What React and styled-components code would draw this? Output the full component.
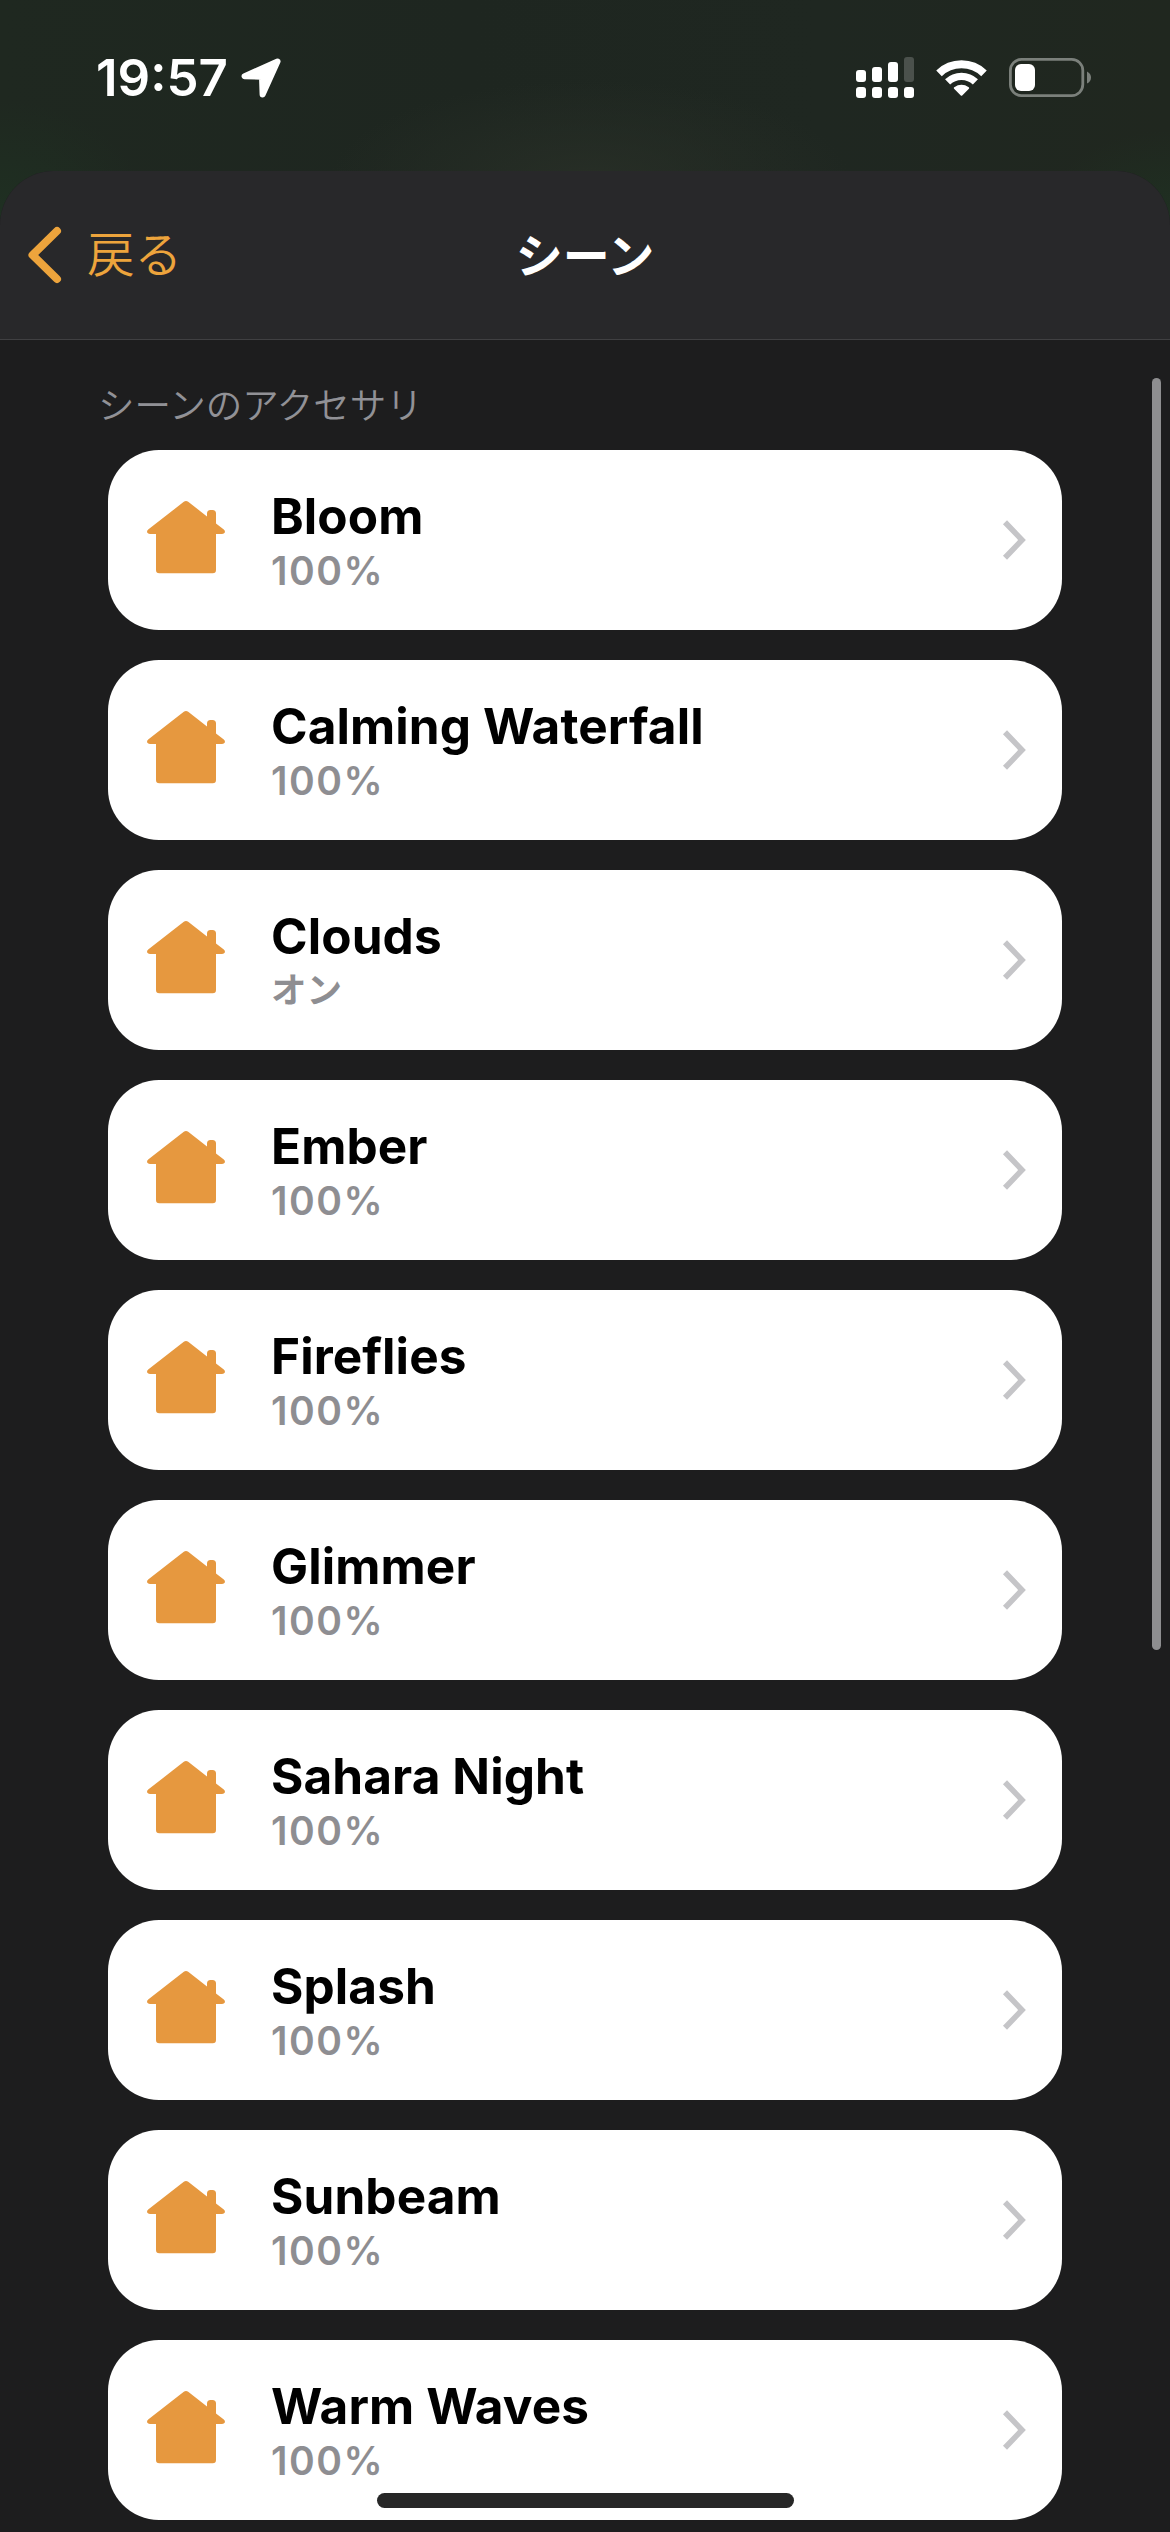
import React from "react";
import styled, { createGlobalStyle } from "styled-components";

const GlobalStyle = createGlobalStyle`
  * { box-sizing: border-box; }
  html, body { margin: 0; padding: 0; background: #1d1d1e; }
  body { font-family: Inter, "Noto Sans CJK JP", sans-serif; }
`;

const Screen = styled.div`
  position: relative;
  display: flex;
  flex-direction: column;
  width: 1170px;
  height: 2532px;
  overflow: hidden;
  background:
    radial-gradient(ellipse 260px 100px at 590px 180px, #272e26 0%, rgba(39, 46, 38, 0) 100%),
    radial-gradient(ellipse 150px 120px at 0 220px, #1f3022 0%, rgba(31, 48, 34, 0) 100%),
    radial-gradient(ellipse 130px 90px at 1170px 220px, #1f3022 0%, rgba(31, 48, 34, 0) 100%),
    linear-gradient(90deg, #1f2820 0%, #1e2620 40%, #1f2721 70%, #20271f 100%);
`;

const StatusBar = styled.header`
  display: flex;
  justify-content: space-between;
  flex: none;
  height: 171px;
  padding: 50px 79px 0 96px;
`;

const StatusGroup = styled.div`
  display: flex;
  align-items: center;
  height: 56px;
`;

const Clock = styled.time`
  width: 145px;
  font-size: 51px;
  font-weight: 600;
  line-height: 56px;
  letter-spacing: 0;
  color: #fff;
`;

const Glyph = styled.svg`
  display: block;
  flex: none;
  margin-left: ${(p) => p.$gap || 0}px;
  margin-bottom: ${(p) => p.$lift || 0}px;
`;

const Sheet = styled.main`
  display: flex;
  flex-direction: column;
  flex: 1;
  overflow: hidden;
  border-radius: 54px 54px 0 0;
  background: #1d1d1e;
`;

const NavBar = styled.nav`
  display: grid;
  grid-template-columns: 1fr auto 1fr;
  align-items: center;
  flex: none;
  height: 169px;
  border-bottom: 1px solid #404042;
  background: #28282a;
`;

const BackButton = styled.button`
  display: flex;
  align-items: center;
  gap: 25px;
  padding: 0 0 0 28px;
  border: 0;
  background: none;
  color: #eda43c;
  font: 350 47.5px/60px "Noto Sans CJK JP", sans-serif;
`;

const BackLabel = styled.span`
  padding-bottom: 6px;
`;

const NavTitle = styled.h1`
  margin: 0;
  padding-bottom: 4px;
  font: 700 47px/60px "Noto Sans CJK JP", sans-serif;
  color: #fff;
`;

const SectionTitle = styled.h2`
  flex: none;
  height: 110px;
  margin: 0;
  padding: 37px 0 0 98px;
  font: 350 36.5px/54px "Noto Sans CJK JP", sans-serif;
  color: #919196;
`;

const SceneList = styled.ul`
  display: flex;
  flex-direction: column;
  gap: 30px;
  margin: 0;
  padding: 0 108px;
  list-style: none;
`;

const SceneCard = styled.li`
  display: flex;
  align-items: center;
  height: 180px;
  padding: 0 36px 0 39px;
  border-radius: 51px;
  background: #fff;
`;

const SceneText = styled.div`
  flex: 1;
  display: flex;
  flex-direction: column;
  padding: 2px 0 0 46px;
`;

const SceneName = styled.span`
  font-size: 49.5px;
  font-weight: 650;
  line-height: 60px;
  letter-spacing: 0.1px;
  color: #000;
`;

const SceneState = styled.span`
  font-size: ${(p) => (p.$kana ? 35.5 : 39)}px;
  font-weight: 600;
  line-height: 50px;
  letter-spacing: ${(p) => (p.$kana ? 0 : 1.5)}px;
  color: #8e8e92;
`;

const ScrollThumb = styled.div`
  position: absolute;
  top: 378px;
  right: 9px;
  width: 9px;
  height: 1272px;
  border-radius: 5px;
  background: #8e8e90;
`;

const HomeIndicator = styled.div`
  position: absolute;
  bottom: 24px;
  left: 377px;
  width: 417px;
  height: 15px;
  border-radius: 8px;
  background: #272727;
`;

const LocationIcon = () => (
  <Glyph width="40" height="40" viewBox="0 0 40 40" fill="#fff" stroke="#fff" strokeWidth="6" strokeLinejoin="round">
    <path d="M36.5 3.5 L3.6 18.2 L21 18.8 L21.6 36.4 Z" />
  </Glyph>
);

const SignalIcon = () => (
  <Glyph $lift={1} width="58" height="41" viewBox="0 0 58 41" fill="#fff">
    <rect x="0" y="13" width="10" height="12" rx="3" />
    <rect x="16" y="10" width="10" height="15" rx="3" />
    <rect x="32" y="5" width="10" height="20" rx="3" />
    <rect x="48" y="0" width="10" height="25" rx="3" fill="#4b514c" />
    {[0, 16, 32, 48].map((x) => (
      <rect key={x} x={x} y="30" width="10" height="11" rx="3" />
    ))}
  </Glyph>
);

const WifiIcon = () => (
  <Glyph $gap={22} $lift={1} width="51" height="38" viewBox="0 0 51 38" fill="none" stroke="#fff">
    <path d="M3 14.3 A32.6 32.6 0 0 1 48 14.3" strokeWidth="8" />
    <path d="M11.6 22.9 A20.2 20.2 0 0 1 39.4 22.9" strokeWidth="7.4" />
    <path d="M18.8 29 Q25.5 24.4 32.2 29 L25.5 35.8 Z" fill="#fff" strokeWidth="2" strokeLinejoin="round" />
  </Glyph>
);

const BatteryIcon = () => (
  <Glyph $gap={22} $lift={1} width="82" height="39" viewBox="0 0 82 39" fill="none">
    <rect x="1.4" y="1.4" width="72.4" height="36.2" rx="11" stroke="#7b807b" strokeWidth="2.8" />
    <rect x="6" y="6" width="20" height="27" rx="6" fill="#fff" />
    <path d="M78 13.5 Q82 15.5 82 19.5 Q82 23.5 78 25.5 Z" fill="#7b807b" />
  </Glyph>
);

const BackIcon = () => (
  <Glyph width="34" height="58" viewBox="0 0 34 58" fill="none" stroke="#eda43c" strokeWidth="8" strokeLinecap="round" strokeLinejoin="round">
    <path d="M29 5 L4.5 29 L29 53" />
  </Glyph>
);

const HouseIcon = () => (
  <Glyph $lift={6} width="78" height="73" viewBox="0 0 78 73" fill="#e6983f">
    <path d="M36.8 0.8 Q39 -0.8 41.2 0.8 L60 15.4 V12.5 Q60 9 63.5 9 H65.5 Q69 9 69 12.5 V22.4 L76.8 28.6 Q78.4 30 77.8 31.6 Q77.2 33 75 33 H69 V69 Q69 72.3 65.7 72.3 H12.3 Q9 72.3 9 69 V33 H3 Q0.8 33 0.2 31.6 Q-0.4 30 1.2 28.6 Z" />
  </Glyph>
);

const ChevronIcon = () => (
  <Glyph width="24" height="40" viewBox="0 0 24 40" fill="none" stroke="#c5c5c8" strokeWidth="5.6">
    <path d="M3 2.2 L20 20 L3 37.8" />
  </Glyph>
);

const scenes = [
  { name: "Bloom", state: "100%" },
  { name: "Calming Waterfall", state: "100%" },
  { name: "Clouds", state: "オン", kana: true },
  { name: "Ember", state: "100%" },
  { name: "Fireflies", state: "100%" },
  { name: "Glimmer", state: "100%" },
  { name: "Sahara Night", state: "100%" },
  { name: "Splash", state: "100%" },
  { name: "Sunbeam", state: "100%" },
  { name: "Warm Waves", state: "100%" },
];

export default function App() {
  return (
    <Screen>
      <GlobalStyle />
      <StatusBar>
        <StatusGroup>
          <Clock>19:57</Clock>
          <LocationIcon />
        </StatusGroup>
        <StatusGroup>
          <SignalIcon />
          <WifiIcon />
          <BatteryIcon />
        </StatusGroup>
      </StatusBar>
      <Sheet>
        <NavBar>
          <BackButton>
            <BackIcon />
            <BackLabel>戻る</BackLabel>
          </BackButton>
          <NavTitle>シーン</NavTitle>
        </NavBar>
        <SectionTitle>シーンのアクセサリ</SectionTitle>
        <SceneList>
          {scenes.map((scene) => (
            <SceneCard key={scene.name}>
              <HouseIcon />
              <SceneText>
                <SceneName>{scene.name}</SceneName>
                <SceneState $kana={scene.kana}>{scene.state}</SceneState>
              </SceneText>
              <ChevronIcon />
            </SceneCard>
          ))}
        </SceneList>
      </Sheet>
      <ScrollThumb />
      <HomeIndicator />
    </Screen>
  );
}
